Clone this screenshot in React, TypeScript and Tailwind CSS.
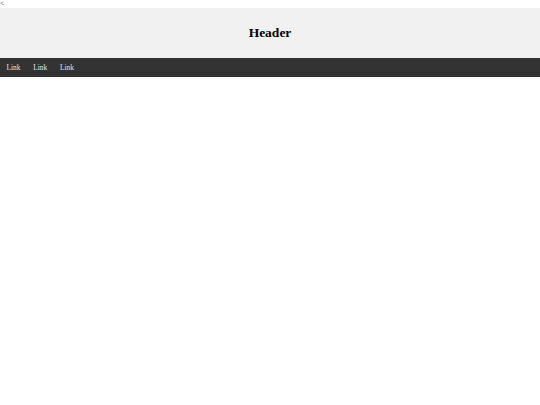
export default function App() {
  const links = ['Link', 'Link', 'Link'];

  return (
    <div className="min-h-[405px] bg-white" style={{ fontFamily: '"Liberation Serif", serif' }}>
      <div className="h-[8px] text-[7.5px] leading-[7px] text-gray-700">&lt;</div>

      <header className="h-[50px] bg-[#f1f1f1] flex items-center justify-center">
        <h1 className="text-[13.5px] font-bold text-black">Header</h1>
      </header>

      <nav className="h-[19px] bg-[#333333] flex items-center pt-[1px]">
        {links.map((l, i) => (
          <span key={i} className="px-[6.5px] text-[7.3px] leading-[18px] text-[#e8e8e8] cursor-pointer">
            {l}
          </span>
        ))}
      </nav>
    </div>
  );
}
